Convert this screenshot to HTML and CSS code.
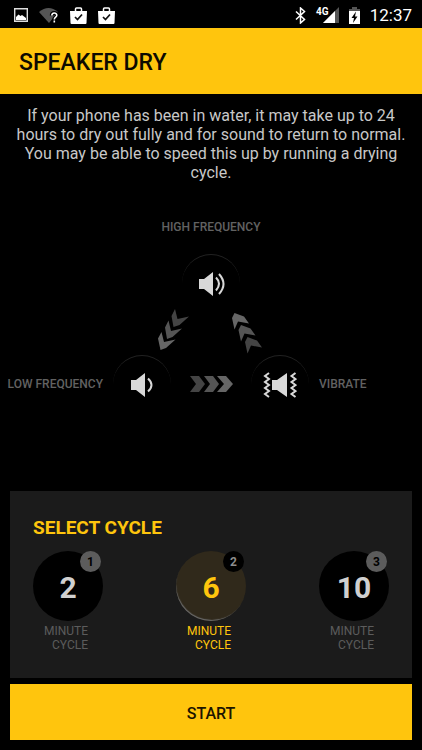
FILE: index.html
```html
<!DOCTYPE html>
<html lang="en">
<head>
<meta charset="utf-8">
<meta name="viewport" content="width=device-width, initial-scale=1">
<title>Speaker Dry</title>
<link rel="stylesheet" href="styles.css">
</head>
<body>
<div class="status">
  <div class="status-group status-left">
    <svg width="14" height="14" viewBox="0 0 14 14" aria-hidden="true"><path d="M.7.7h12.6v12.6H.7z" fill="none" stroke="#ddd" stroke-width="1.4"/><path d="M2 12V9l2.500-2.500L6.500 8 8 7l4 3v2z" fill="#fff"/></svg>
    <svg width="20" height="16" viewBox="0 0 20 16" aria-hidden="true"><path d="M0 5Q9.500-3 19 5L10 16z" fill="#555"/><path d="M12.800 8.500c0-3.300 5-3.300 5-.3 0 2-2.500 2-2.500 4.300M15.300 13.500v2" fill="none" stroke="#000" stroke-width="4"/><path d="M12.800 8.500c0-3.300 5-3.300 5-.3 0 2-2.500 2-2.500 4.300M15.300 13.500v2" fill="none" stroke="#fff" stroke-width="1.600"/></svg>
    <svg width="17" height="17" viewBox="0 0 17 17" aria-hidden="true"><path d="M0 4h17l-.5 12q0 1-1 1h-14q-1 0-1-1z" fill="#fff"/><path d="M5.500 4V2q0-1 1-1h4q1 0 1 1v2" fill="none" stroke="#fff" stroke-width="1.500"/><path d="M5 10l2.500 2.500L12 7.500" fill="none" stroke="#111" stroke-width="1.700"/></svg>
    <svg width="17" height="17" viewBox="0 0 17 17" aria-hidden="true"><path d="M0 4h17l-.5 12q0 1-1 1h-14q-1 0-1-1z" fill="#fff"/><path d="M5.500 4V2q0-1 1-1h4q1 0 1 1v2" fill="none" stroke="#fff" stroke-width="1.500"/><path d="M5 10l2.500 2.500L12 7.500" fill="none" stroke="#111" stroke-width="1.700"/></svg>
  </div>
  <div class="status-group status-right">
    <svg width="11" height="17" viewBox="0 0 11 17" aria-hidden="true"><path d="M1 4.500l8.500 8L5.500 16V1l4 3.500-8.500 8" fill="none" stroke="#fff" stroke-width="1.500"/></svg>
    <span class="signal"><span class="network">4G</span><svg width="17" height="16" viewBox="0 0 17 16" aria-hidden="true"><path d="M17 0v16H1z" fill="#555"/><path d="M13 4v12H1z" fill="#fff"/></svg></span>
    <svg width="11" height="17" viewBox="0 0 11 17" aria-hidden="true"><path d="M3 0h5v2h3v4H0V2h3z" fill="#555"/><path d="M0 4h11v13H0z" fill="#fff"/><path d="M7 4.500L2.500 11H5l-1 5L8.500 9.500H6z" fill="#000"/></svg>
    <time class="clock">12:37</time>
  </div>
</div>

<header class="header"><h1 class="title">SPEAKER DRY</h1></header>

<main class="main">
  <p class="intro">If your phone has been in water, it may take up to 24 hours to dry out fully and for sound to return to normal. You may be able to speed this up by running a drying cycle.</p>

  <section class="diagram" aria-label="Drying sequence">
    <div class="stage-label">HIGH FREQUENCY</div>
    <div class="node">
      <svg width="30" height="24" viewBox="0 0 30 24" aria-hidden="true"><path d="M3 7h5l9-7v24l-9-7H3z" fill="#d8d8d8"/><path d="M20 5.500q6 6 0 13M23 2q9 10 0 20" fill="none" stroke="#d8d8d8" stroke-width="2"/></svg>
    </div>
    <div class="slopes">
      <svg width="32" height="47" viewBox="0 0 32 47" aria-hidden="true"><path d="M17 1l2.500 10L31 8.500 21.500 17l-6 2L13.500 8z" fill="#444"/><path d="M10.500 12.500L13 23l11-2.500L14.500 29 9 31 7 19.500z" fill="#555"/><path d="M3.500 24L6 34l11.500-2.500L8 40l-5.500 2L0 30.500z" fill="#666"/></svg>
      <svg width="32" height="47" viewBox="0 0 32 47" aria-hidden="true"><path d="M2.500 5L12 8.500l5 7-11-2-3.500 8L0 10z" fill="#666"/><path d="M9 17l9.500 3.500 5 7-11-2-3.500 8L6.500 22z" fill="#555"/><path d="M15.500 29l9.500 3.500 5 7-11-2-3.500 8L13 34z" fill="#444"/></svg>
    </div>
    <div class="base">
      <div class="stage-label label-low">LOW FREQUENCY</div>
      <div class="node">
        <svg width="30" height="24" viewBox="0 0 30 24" aria-hidden="true"><path d="M4 7h5l9-7v24l-9-7H4z" fill="#d8d8d8"/><path d="M21 5.500q7 6.500 0 13" fill="none" stroke="#d8d8d8" stroke-width="2"/></svg>
      </div>
      <svg width="43" height="16" viewBox="0 0 43 16" aria-hidden="true"><path d="M0 0h9l6 8-6 8H0l6-8z" fill="#444"/><path d="M14 0h9l6 8-6 8h-9l6-8z" fill="#555"/><path d="M27 0h9l7 8-7 8h-9l7-8z" fill="#666"/></svg>
      <div class="node">
        <svg width="34" height="26" viewBox="0 0 34 26" aria-hidden="true"><path d="M9 8h5l10-7v24l-10-7H9z" fill="#d8d8d8"/><path d="M6 1L2 4l4 3-4 3 4 3-4 3 4 3-4 3 4 3M32.500 1l-4 3 4 3-4 3 4 3-4 3 4 3-4 3 4 3" fill="none" stroke="#d8d8d8" stroke-width="2"/></svg>
      </div>
      <div class="stage-label label-vibrate">VIBRATE</div>
    </div>
  </section>

  <form class="form">
    <fieldset class="panel">
      <legend class="panel-title">SELECT CYCLE</legend>
      <div class="cycles">
        <label class="cycle"><input class="radio" type="radio" name="cycle" value="2"><span class="dial">2<span class="badge">1</span></span><span class="unit">MINUTE<br>CYCLE</span></label>
        <label class="cycle"><input class="radio" type="radio" name="cycle" value="6" checked><span class="dial">6<span class="badge">2</span></span><span class="unit">MINUTE<br>CYCLE</span></label>
        <label class="cycle"><input class="radio" type="radio" name="cycle" value="10"><span class="dial">10<span class="badge">3</span></span><span class="unit">MINUTE<br>CYCLE</span></label>
      </div>
    </fieldset>
    <button class="start" type="button">START</button>
  </form>
</main>
</body>
</html>
```
FILE: styles.css
```css
* { box-sizing: border-box; }

body {
  margin: 0;
  min-height: 100vh;
  display: flex;
  flex-direction: column;
  background: #000;
  color: #c8c8c8;
  font-family: Roboto, "Liberation Sans", sans-serif;
}

svg { display: block; flex: none; }

.status {
  height: 28px;
  display: flex;
  justify-content: space-between;
  align-items: center;
  padding: 2px 10px 0 14px;
}

.status-group { display: flex; align-items: center; }
.status-left { gap: 11px; }
.status-right { gap: 10px; }
.signal { display: flex; }

.network {
  margin-right: -7px;
  color: #fff;
  font-size: 10px;
  line-height: 10px;
  font-weight: 700;
}

.clock { color: #fff; font-size: 17px; line-height: 20px; }

.header {
  height: 66px;
  display: flex;
  align-items: center;
  padding: 2px 19px 0;
  background: #ffc50d;
}

.title { margin: 0; color: #0d0a00; font-size: 23px; font-weight: 500; }

.main { flex: 1; display: flex; flex-direction: column; }

.intro {
  margin: 12px 10px 0;
  font-size: 16px;
  line-height: 19px;
  text-align: center;
}

.diagram {
  display: flex;
  flex-direction: column;
  align-items: center;
  margin-top: 37px;
}

.stage-label { color: #626262; font-size: 12px; font-weight: 500; line-height: 16px; }

.node {
  width: 58px;
  height: 58px;
  display: flex;
  align-items: center;
  justify-content: center;
  border-radius: 50%;
  border-top: 1px solid #222;
}

.diagram > .node { margin-top: 19px; }

.slopes { display: flex; justify-content: center; gap: 42px; margin-top: -4px; }

.base {
  align-self: stretch;
  display: grid;
  grid-template-columns: 1fr 58px 80px 58px 1fr;
  align-items: center;
  justify-items: center;
}

.label-low { justify-self: end; padding-right: 10px; }
.label-vibrate { justify-self: start; padding-left: 10px; }

.form { display: flex; flex-direction: column; margin: auto 10px 10px; gap: 6px; }

.panel { min-width: 0; margin: 0; padding: 24px 23px 26px; border: 0; background: #1b1b1b; }

.panel-title {
  float: left;
  width: 100%;
  padding: 0;
  color: #ffc50d;
  font-size: 19px;
  font-weight: 700;
  line-height: 26px;
}

.cycles { clear: both; display: flex; justify-content: space-between; padding-top: 10px; }

.cycle { position: relative; width: 70px; color: #5c5c5c; cursor: pointer; }

.radio { position: absolute; opacity: 0; margin: 0; }

.dial {
  position: relative;
  height: 70px;
  display: flex;
  align-items: center;
  justify-content: center;
  padding-top: 3px;
  border-radius: 50%;
  background: #000;
  color: #d0d0d0;
  font-size: 30px;
  font-weight: 700;
}

.badge {
  position: absolute;
  top: 0;
  right: 2px;
  width: 21px;
  height: 21px;
  border-radius: 50%;
  background: #5c5c5c;
  color: #000;
  font-size: 12px;
  line-height: 22px;
  text-align: center;
}

.unit { display: block; width: 55px; padding-top: 3px; font-size: 12px; line-height: 14px; text-align: right; }

.radio:checked ~ .dial { background: #30291b; color: #ffc50d; box-shadow: inset 1px -2px 1px -1px #6c6c6c; }
.radio:checked ~ .dial .badge { background: #000; color: #8c8c8c; }
.radio:checked ~ .unit { color: #ffc50d; }
.radio:focus-visible ~ .dial { outline: 2px solid #ffc50d; }

.start {
  height: 56px;
  padding-top: 3px;
  border: 0;
  background: #ffc50d;
  color: #1b1400;
  font: 500 16px Roboto, "Liberation Sans", sans-serif;
  cursor: pointer;
}
```
